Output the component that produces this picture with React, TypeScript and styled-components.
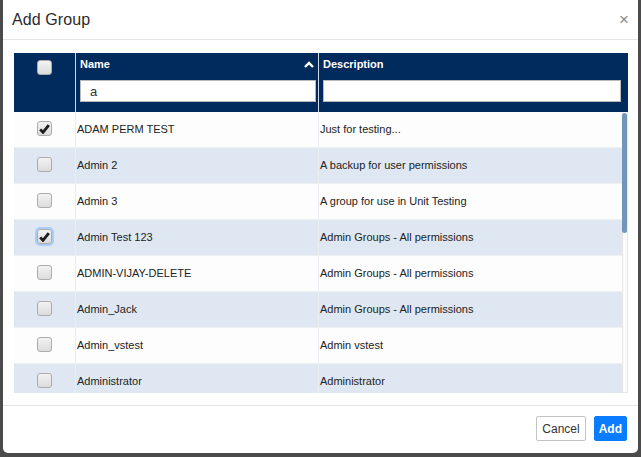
import React from 'react';
import styled, { createGlobalStyle } from 'styled-components';

const GlobalStyle = createGlobalStyle`
  html, body {
    margin: 0;
    padding: 0;
    background: #4b4b4b;
    font-family: "Liberation Sans", Arial, sans-serif;
  }
`;

const Page = styled.div`
  width: 641px;
  height: 457px;
  overflow: hidden;
  padding-left: 3px;
  box-sizing: border-box;
`;

const Modal = styled.div`
  width: 635px;
  height: 453px;
  background: #fff;
  border-radius: 0 0 5px 5px;
  display: flex;
  flex-direction: column;
`;

const Header = styled.div`
  height: 40px;
  box-sizing: border-box;
  border-bottom: 1px solid #e4e4e4;
  display: flex;
  align-items: center;
  justify-content: space-between;
  padding: 0 9px 0 9px;
`;

const Title = styled.h4`
  margin: 0;
  font-size: 16px;
  font-weight: 500;
  color: #2b2b2b;
  letter-spacing: 0.1px;
`;

const Close = styled.button`
  border: 0;
  background: none;
  padding: 0;
  font-size: 17px;
  color: #8a8a8a;
  font-family: "Liberation Sans", Arial, sans-serif;
  cursor: pointer;
  line-height: 1;
`;

const Body = styled.div`
  padding: 13px 10px 12px 11px;
  border-bottom: 1px solid #e4e4e4;
`;

const Table = styled.div`
  width: 614px;
`;

const HeadRow = styled.div`
  display: grid;
  grid-template-columns: 62px 243px 1fr;
  height: 59px;
  background: #002b5c;
`;

const HeadCell = styled.div<{ $last?: boolean }>`
  box-sizing: border-box;
  border-right: ${(p) => (p.$last ? 'none' : '1px solid #cfd8e3')};
  padding: 4px ${(p) => (p.$last ? '7px' : '2px')} 0 4px;
  display: flex;
  flex-direction: column;
`;

const CheckHeadCell = styled(HeadCell)`
  align-items: center;
  padding: 7px 0 0 0;
`;

const HeadLabel = styled.div`
  display: flex;
  justify-content: space-between;
  align-items: center;
  color: #fff;
  font-size: 11px;
  font-weight: bold;
  height: 14px;
  padding-right: 2px;
`;

const FilterInput = styled.input`
  margin-top: 9px;
  height: 22px;
  box-sizing: border-box;
  border: 1px solid #b9b9b9;
  background: #fff;
  padding: 0 9px;
  font-size: 13px;
  font-family: "Liberation Sans", Arial, sans-serif;
  color: #333;
  outline: none;
  width: 100%;
`;

const BodyWrap = styled.div`
  display: flex;
  height: 281px;
`;

const Rows = styled.div`
  flex: 1;
  overflow: hidden;
`;

const Track = styled.div`
  width: 6px;
  box-sizing: border-box;
  background: #fafafa;
  border-left: 1px solid #e6e6e6;
  border-right: 1px solid #e6e6e6;
  border-bottom: 1px solid #e6e6e6;
  padding-top: 1px;
`;

const Thumb = styled.div`
  width: 5px;
  margin-left: -1px;
  height: 120px;
  background: #7096b9;
  border-radius: 3px;
`;

const Row = styled.div<{ $alt: boolean }>`
  display: grid;
  grid-template-columns: 62px 243px 1fr;
  height: 36px;
  background: ${(p) => (p.$alt ? '#dfe8f2' : '#fdfdfd')};
  border-bottom: 1px solid #eef1f4;
  box-sizing: border-box;
`;

const Cell = styled.div<{ $last?: boolean }>`
  box-sizing: border-box;
  border-right: ${(p) => (p.$last ? 'none' : '1px solid #e9edf1')};
  display: flex;
  align-items: center;
  padding-left: 1px;
  padding-bottom: 2px;
  font-size: 11px;
  color: #222;
  white-space: nowrap;
`;

const CheckCell = styled(Cell)`
  justify-content: center;
  padding-left: 0;
`;

const Box = styled.span<{ $focus?: boolean }>`
  width: 15px;
  height: 15px;
  box-sizing: border-box;
  border: 1px solid #acacac;
  border-radius: 3px;
  background: linear-gradient(#f2f2f2, #dcdcdc);
  display: inline-flex;
  align-items: center;
  justify-content: center;
  box-shadow: ${(p) => (p.$focus ? '0 0 0 2px #a9cdf5' : 'none')};
`;

const Footer = styled.div`
  flex: 1;
  display: flex;
  justify-content: flex-end;
  align-items: center;
  gap: 8px;
  padding: 0 11px 2px 0;
`;

const Button = styled.button<{ $primary?: boolean }>`
  height: 25px;
  box-sizing: border-box;
  padding: 0 ${(p) => (p.$primary ? '4px' : '5px')};
  font-size: 12px;
  font-family: "Liberation Sans", Arial, sans-serif;
  font-weight: ${(p) => (p.$primary ? 'bold' : 'normal')};
  color: ${(p) => (p.$primary ? '#fff' : '#333')};
  background: ${(p) => (p.$primary ? '#0a7cff' : '#fff')};
  border: 1px solid ${(p) => (p.$primary ? '#0a7cff' : '#c4c4c4')};
  border-radius: 2px;
  cursor: pointer;
`;

const Check = () => (
  <svg width="11" height="10" viewBox="0 0 11 10">
    <path d="M1.2 5.4 L4 8.4 L9.8 1.2" fill="none" stroke="#1e1e1e" strokeWidth="2.8" />
  </svg>
);

const CheckBox = ({ checked, focus }: { checked?: boolean; focus?: boolean }) => (
  <Box $focus={focus}>{checked && <Check />}</Box>
);

const SortUp = () => (
  <svg width="10" height="7" viewBox="0 0 10 7">
    <path d="M1 6 L5 2 L9 6" fill="none" stroke="#fff" strokeWidth="2.4" />
  </svg>
);

const groups = [
  { name: 'ADAM PERM TEST', desc: 'Just for testing...', checked: true },
  { name: 'Admin 2', desc: 'A backup for user permissions' },
  { name: 'Admin 3', desc: 'A group for use in Unit Testing' },
  { name: 'Admin Test 123', desc: 'Admin Groups - All permissions', checked: true, focus: true },
  { name: 'ADMIN-VIJAY-DELETE', desc: 'Admin Groups - All permissions' },
  { name: 'Admin_Jack', desc: 'Admin Groups - All permissions' },
  { name: 'Admin_vstest', desc: 'Admin vstest' },
  { name: 'Administrator', desc: 'Administrator' },
];

const App = () => (
  <>
    <GlobalStyle />
    <Page>
      <Modal>
        <Header>
          <Title>Add Group</Title>
          <Close aria-label="close">×</Close>
        </Header>
        <Body>
          <Table>
            <HeadRow>
              <CheckHeadCell>
                <CheckBox />
              </CheckHeadCell>
              <HeadCell>
                <HeadLabel>
                  Name
                  <SortUp />
                </HeadLabel>
                <FilterInput defaultValue="a" />
              </HeadCell>
              <HeadCell $last>
                <HeadLabel>Description</HeadLabel>
                <FilterInput />
              </HeadCell>
            </HeadRow>
            <BodyWrap>
              <Rows>
                {groups.map((g, i) => (
                  <Row key={g.name} $alt={i % 2 === 1}>
                    <CheckCell>
                      <CheckBox checked={g.checked} focus={g.focus} />
                    </CheckCell>
                    <Cell>{g.name}</Cell>
                    <Cell $last>{g.desc}</Cell>
                  </Row>
                ))}
              </Rows>
              <Track>
                <Thumb />
              </Track>
            </BodyWrap>
          </Table>
        </Body>
        <Footer>
          <Button>Cancel</Button>
          <Button $primary>Add</Button>
        </Footer>
      </Modal>
    </Page>
  </>
);

export default App;
